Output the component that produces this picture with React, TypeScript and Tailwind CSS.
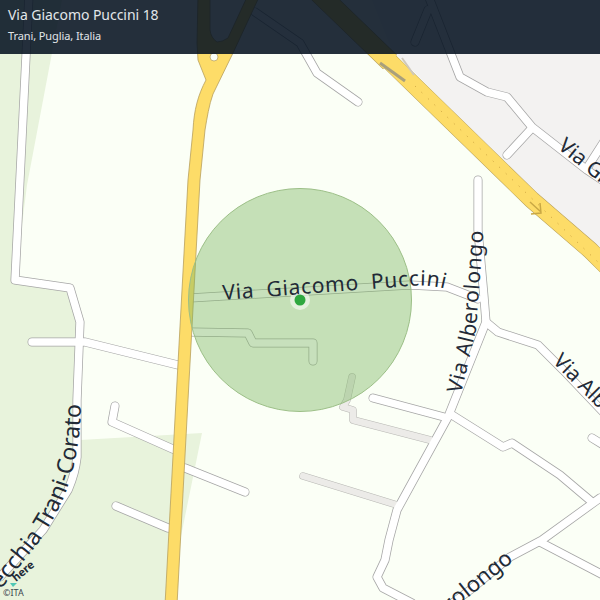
const labelFont = "'Noto Sans', sans-serif";

const minorRoads = [
  "M29 -5 L15 280 L70 288 L80 322 L77 400 L77 457 C75 475 70 485 68 490 L43 530 L0 577",
  "M32 342 L85 342 L178 365",
  "M115 406 L112 422 L175 450",
  "M185 468 L245 492",
  "M116 506 L168 528",
  "M190 298 L410 285 L447 287 L478 299",
  "M190 332 L248 333 L253 343 L313 343 L313 361",
  "M478 180 L478 230 L484 297 L486 322 L448 417 L397 510 L389 540 L385 560 L377 577 L383 588 L412 603",
  "M486 322 L498 332 L538 345 L563 370 L605 414",
  "M373 398 L444 417",
  "M452 415 L503 447 L512 443 L560 475 L592 502",
  "M600 498 L542 540 L510 557 L470 590 L450 605",
  "M540 542 L605 576",
  "M592 438 L605 446",
  "M255 12 L300 43 L317 73 L358 102",
  "M428 -5 L460 77 L487 92 L507 97 L532 127 L587 170 L605 182",
  "M532 128 L507 155",
  "M428 10 L415 42",
  "M587 168 L605 140",
];

const paths = [
  "M352 377 L347 400 L343 407 L353 410 L353 420 L430 440",
  "M303 476 L397 505",
];

const yellowRoad =
  "M198 -5 L197 43 L198 60 L206 80 C198 95 194 110 193 130 L188 180 L176 400 L165 605 L177 605 L188 400 L200 180 L205 130 C207 118 209 105 213 94 L233 53 L260 -5 L248 -5 L228 38 Q222 42 217 42 Q211 38 210 30 L210 -5 Z";
const motorway = "M382 54 L532 200 L590 250 L612 272";
const motorwayTop = "M300 -25 L390 62";

function MapLayer() {
  return (
    <svg className="absolute inset-0" width="600" height="600" viewBox="0 0 600 600">
      <rect width="600" height="600" fill="#fbfff6" />
      <path d="M0 0 L62 0 L27 185 L15 280 L70 288 L80 322 L80 440 L202 433 L168 600 L0 600 Z" fill="#e8f3dc" />
      <path d="M370 -5 L600 -5 L600 258 L392 50 Z" fill="#f3f2f1" />

      {minorRoads.map((d) => (
        <path key={d} d={d} fill="none" stroke="#a6a6a6" strokeWidth="9" strokeLinecap="round" strokeLinejoin="round" />
      ))}
      {paths.map((d) => (
        <path key={d} d={d} fill="none" stroke="#b8b8b4" strokeWidth="7.5" strokeLinecap="round" strokeLinejoin="round" />
      ))}
      {paths.map((d) => (
        <path key={d} d={d} fill="none" stroke="#ecebe8" strokeWidth="6.5" strokeLinecap="round" strokeLinejoin="round" />
      ))}
      {minorRoads.map((d) => (
        <path key={d} d={d} fill="none" stroke="#ffffff" strokeWidth="7.5" strokeLinecap="round" strokeLinejoin="round" />
      ))}

      <path d={motorway} fill="none" stroke="#b8a05c" strokeWidth="17.5" />
      <path d={motorwayTop} fill="none" stroke="#b8a05c" strokeWidth="20" />
      <path d={motorway} fill="none" stroke="#fddc68" strokeWidth="16.5" />
      <path d={motorwayTop} fill="none" stroke="#fddc68" strokeWidth="19" />
      <path d={yellowRoad} fill="#fddc68" stroke="#b8a05c" strokeWidth="0.8" />
      <circle cx="214" cy="57" r="4" fill="#fbfff6" stroke="#b8a05c" strokeWidth="0.75" />
      <path d="M415 86 L600 264" fill="none" stroke="#c99f3c" strokeWidth="1" strokeDasharray="1 8" />
      <path d="M380 63 L405 81" fill="none" stroke="#a9a07c" strokeWidth="3" />
      <path d="M402 58 L414 75" fill="none" stroke="#cfc8bb" strokeWidth="2" />
      <path d="M530 202 L541 212 M531 214 L541 213 L540 203" fill="none" stroke="#c9a845" strokeWidth="1.5" />

      <circle cx="300" cy="300" r="111.5" fill="#79b45f" fillOpacity="0.42" stroke="#9cbf87" strokeWidth="1" />
      <circle cx="300" cy="300" r="10" fill="#ffffff" fillOpacity="0.55" />
      <circle cx="300" cy="300" r="5.5" fill="#2fa83f" />

      <g fontFamily={labelFont} fill="#222a36" fontSize="21">
        <path id="puccini" d="M223 300 L410 286 Q430 284 450 290" fill="none" />
        <text wordSpacing="6" letterSpacing="0.7">
          <textPath href="#puccini">Via Giacomo Puccini</textPath>
        </text>
        <path id="alberolongo" d="M461 394 L476 330 L484 225" fill="none" />
        <text letterSpacing="0.6">
          <textPath href="#alberolongo">Via Alberolongo</textPath>
        </text>
        <path id="alberolongo2" d="M552 362 L620 430" fill="none" />
        <text>
          <textPath href="#alberolongo2">Via Alberolongo</textPath>
        </text>
        <path id="alberolongo3" d="M400 660 L460 604 L514 561" fill="none" />
        <text textAnchor="end" fontSize="22">
          <textPath href="#alberolongo3" startOffset="100%">Via Alberolongo</textPath>
        </text>
        <path id="giacomo" d="M557 148 L640 215" fill="none" />
        <text>
          <textPath href="#giacomo">Via Giacomo Puccini</textPath>
        </text>
        <path id="corato" d="M-40 640 L36 546 C62 510 80 470 81 404" fill="none" />
        <text textAnchor="end" fontSize="23">
          <textPath href="#corato" startOffset="100%">Via Vecchia Trani-Corato</textPath>
        </text>
      </g>

      <g transform="translate(16 582) rotate(-40)">
        <text fontFamily={labelFont} fontSize="11" fontWeight="700" fill="#222a36">here</text>
      </g>
      <path d="M10 583 L17 583 L13 587 Z" fill="#4fc7b4" />
      <text x="3" y="596" fontFamily={labelFont} fontSize="9" fill="#3c4650">©ITA</text>
    </svg>
  );
}

export default function App() {
  return (
    <div className="relative w-[600px] h-[600px] overflow-hidden bg-[#fbfff6]">
      <MapLayer />
      <div className="relative h-[54px] bg-[#03101f]/87 px-2 pt-[5px] text-[#e2e6e9] font-['Noto_Sans',sans-serif]">
        <div className="text-[14px] leading-5 tracking-[-0.05px]">Via Giacomo Puccini 18</div>
        <div className="mt-[3px] text-[11px] leading-4 tracking-[-0.1px]">Trani, Puglia, Italia</div>
      </div>
    </div>
  );
}
